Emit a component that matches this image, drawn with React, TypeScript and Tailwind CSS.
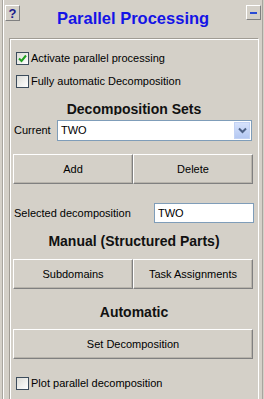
import React from "react";

const font = { fontFamily: "Tahoma, 'Liberation Sans', Arial, sans-serif" };

function Check({ checked, label }: { checked?: boolean; label: string }) {
  return (
    <div className="flex items-center h-[13px]">
      <div className="w-[13px] h-[13px] border border-[#3c4c5c] bg-gradient-to-br from-[#dcdcd7] to-[#ffffff] flex items-center justify-center shrink-0">
        {checked && (
          <svg width="9" height="9" viewBox="0 0 9 9">
            <path d="M1 4.5 L3.5 7 L8 1.5" stroke="#21a121" strokeWidth="2" fill="none" />
          </svg>
        )}
      </div>
      <span className="ml-[2px] text-[11px] leading-[13px] text-[#000]">{label}</span>
    </div>
  );
}

function Btn({ label, w }: { label: string; w: string }) {
  return (
    <div
      className={`${w} h-[30px] flex items-center justify-center text-[11px] text-black bg-[#d4d0c8] border border-t-white border-l-white border-b-[#808080] border-r-[#808080] shadow-[inset_-1px_-1px_0_#b8b4ac]`}
    >
      {label}
    </div>
  );
}

export default function App() {
  return (
    <div style={font} className="w-[264px] h-[399px] bg-[#d4d0c8] overflow-hidden flex">
      <div className="w-[2px] shrink-0" />
      <div className="w-[1px] shrink-0 bg-[#a8a59e]" />
      <div className="w-[1px] shrink-0 bg-white" />
      <div className="flex-1 flex flex-col">
        <div className="h-[38px] flex items-start pt-[5px]">
          <div className="ml-[1px] w-[15px] h-[16px] bg-[#d4d0c8] border border-t-white border-l-white border-b-[#808080] border-r-[#808080] flex items-center justify-center text-[13px] font-bold leading-none text-[#1a1a8c]">
            ?
          </div>
          <div className="flex-1 text-center text-[16.5px] font-bold text-[#1414e6] leading-[22px] mt-[2px]">
            Parallel Processing
          </div>
          <div className="mr-[1px] w-[15px] h-[15px] bg-[#d4d0c8] border border-t-white border-l-white border-b-[#808080] border-r-[#808080] flex items-center justify-center">
            <div className="w-[7px] h-[2px] bg-[#2a4bd4]" />
          </div>
        </div>
        <div className="ml-[5px] w-[250px] flex-1 border border-t-[#a09c94] border-l-[#a09c94] border-r-white border-b-0 shadow-[inset_1px_1px_0_#ffffff] flex flex-col">
          <div className="mt-[13px] ml-[6px]">
            <Check checked label="Activate parallel processing" />
          </div>
          <div className="mt-[10px] ml-[6px]">
            <Check label="Fully automatic Decomposition" />
          </div>
          <div className="mt-[13px] h-[14px] overflow-hidden text-center text-[14px] font-bold leading-[17px] text-[#111]">
            Decomposition Sets
          </div>
          <div className="mt-[5px] flex items-center h-[21px]">
            <span className="ml-[4px] text-[11px] text-black w-[43px]">Current</span>
            <div className="w-[195px] h-[21px] bg-white border border-[#7f9db9] flex items-center">
              <span className="ml-[3px] text-[11px] text-black flex-1">TWO</span>
              <div className="w-[16px] h-[17px] mr-[1px] bg-gradient-to-b from-[#d6e2fc] to-[#b4c8f2] border border-[#c2d2f4] flex items-center justify-center">
                <svg width="9" height="7" viewBox="0 0 9 7">
                  <path d="M1 1.5 L4.5 5 L8 1.5" stroke="#4d6185" strokeWidth="2" fill="none" />
                </svg>
              </div>
            </div>
          </div>
          <div className="mt-[13px] ml-[3px] flex">
            <Btn w="w-[120px]" label="Add" />
            <Btn w="w-[120px]" label="Delete" />
          </div>
          <div className="mt-[19px] flex items-center h-[20px]">
            <span className="ml-[4px] text-[11px] text-black w-[140px]">Selected decomposition</span>
            <div className="w-[100px] h-[20px] bg-white border border-[#7f9db9] flex items-center">
              <span className="ml-[3px] text-[11px] text-black">TWO</span>
            </div>
          </div>
          <div className="mt-[10px] h-[17px] text-center text-[14px] font-bold leading-[17px] text-[#111]">
            Manual (Structured Parts)
          </div>
          <div className="mt-[9px] ml-[3px] flex">
            <Btn w="w-[120px]" label="Subdomains" />
            <Btn w="w-[120px]" label="Task Assignments" />
          </div>
          <div className="mt-[15px] h-[17px] text-center text-[14px] font-bold leading-[17px] text-[#111]">
            Automatic
          </div>
          <div className="mt-[8px] ml-[3px] flex">
            <Btn w="w-[240px]" label="Set Decomposition" />
          </div>
          <div className="mt-[18px] ml-[6px]">
            <Check label="Plot parallel decomposition" />
          </div>
        </div>
      </div>
      <div className="w-[1px] shrink-0 bg-[#a8a59e]" />
      <div className="w-[1px] shrink-0" />
    </div>
  );
}
